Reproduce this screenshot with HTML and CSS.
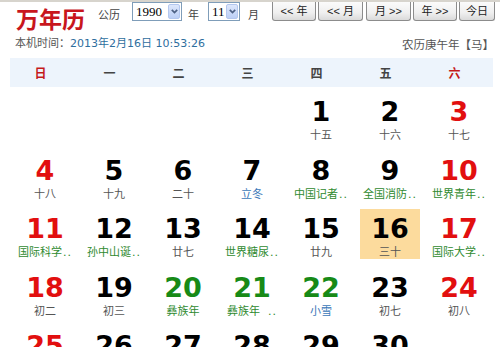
FILE: index.html
```html
<!DOCTYPE html>
<html lang="zh-CN">
<head>
<meta charset="utf-8">
<title>万年历</title>
<link rel="stylesheet" href="styles.css">
</head>
<body>
<div class="page">
  <div class="toolbar">
    <div class="title">万年历</div>
    <span class="lbl lbl-gl">公历</span>
    <div class="sel sel-year"><span class="val">1990</span><span class="arr"><svg width="7" height="5" viewBox="0 0 7 5"><path d="M0.8 0.8 L3.5 3.6 L6.2 0.8" fill="none" stroke="#4d6185" stroke-width="1.7"/></svg></span></div>
    <span class="lbl lbl-y">年</span>
    <div class="sel sel-month"><span class="val">11</span><span class="arr"><svg width="7" height="5" viewBox="0 0 7 5"><path d="M0.8 0.8 L3.5 3.6 L6.2 0.8" fill="none" stroke="#4d6185" stroke-width="1.7"/></svg></span></div>
    <span class="lbl lbl-m">月</span>
    <div class="btns">
      <button class="btn b1">&lt;&lt; 年</button>
      <button class="btn b2">&lt;&lt; 月</button>
      <button class="btn b3">月 &gt;&gt;</button>
      <button class="btn b4">年 &gt;&gt;</button>
      <button class="btn b5">今日</button>
    </div>
  </div>
  <div class="info">
    <span class="now">本机时间：<span class="time">2013年2月16日 10:53:26</span></span>
    <span class="lyear">农历庚午年【马】</span>
  </div>
  <div class="cal">
    <div class="week">
      <span class="we">日</span><span>一</span><span>二</span><span>三</span><span>四</span><span>五</span><span class="we">六</span>
    </div>
    <div class="days">
      <div class="d"></div>
      <div class="d"></div>
      <div class="d"></div>
      <div class="d"></div>
      <div class="d"><b class="n">1</b><span class="l">十五</span></div>
      <div class="d"><b class="n">2</b><span class="l">十六</span></div>
      <div class="d"><b class="n red">3</b><span class="l">十七</span></div>

      <div class="d"><b class="n red">4</b><span class="l">十八</span></div>
      <div class="d"><b class="n">5</b><span class="l">十九</span></div>
      <div class="d"><b class="n">6</b><span class="l">二十</span></div>
      <div class="d"><b class="n">7</b><span class="l term">立冬</span></div>
      <div class="d"><b class="n">8</b><span class="l fest">中国记者<i class="dots">..</i></span></div>
      <div class="d"><b class="n">9</b><span class="l fest">全国消防<i class="dots">..</i></span></div>
      <div class="d"><b class="n red">10</b><span class="l fest">世界青年<i class="dots">..</i></span></div>

      <div class="d"><b class="n red">11</b><span class="l fest">国际科学<i class="dots">..</i></span></div>
      <div class="d"><b class="n">12</b><span class="l fest">孙中山诞<i class="dots">..</i></span></div>
      <div class="d"><b class="n">13</b><span class="l">廿七</span></div>
      <div class="d"><b class="n">14</b><span class="l fest">世界糖尿<i class="dots">..</i></span></div>
      <div class="d"><b class="n">15</b><span class="l">廿九</span></div>
      <div class="d today"><b class="n">16</b><span class="l">三十</span></div>
      <div class="d"><b class="n red">17</b><span class="l fest">国际大学<i class="dots">..</i></span></div>

      <div class="d"><b class="n red">18</b><span class="l">初二</span></div>
      <div class="d"><b class="n">19</b><span class="l">初三</span></div>
      <div class="d"><b class="n grn">20</b><span class="l fest">彝族年</span></div>
      <div class="d"><b class="n grn">21</b><span class="l fest">彝族年<i class="dots gap">..</i></span></div>
      <div class="d"><b class="n grn">22</b><span class="l term">小雪</span></div>
      <div class="d"><b class="n">23</b><span class="l">初七</span></div>
      <div class="d"><b class="n red">24</b><span class="l">初八</span></div>

      <div class="d"><b class="n red">25</b><span class="l">初九</span></div>
      <div class="d"><b class="n">26</b><span class="l">初十</span></div>
      <div class="d"><b class="n">27</b><span class="l">十一</span></div>
      <div class="d"><b class="n">28</b><span class="l">十二</span></div>
      <div class="d"><b class="n">29</b><span class="l">十三</span></div>
      <div class="d"><b class="n">30</b><span class="l">十四</span></div>
      <div class="d"></div>
    </div>
  </div>
</div>
</body>
</html>
```

FILE: styles.css
```css
html, body {
  margin: 0;
  padding: 0;
  overflow: hidden;
  background: #fff;
}
body {
  border-top: 2px solid #d7d4cd;
  font-family: "DejaVu Sans", "Noto Sans CJK SC", sans-serif;
  color: #333;
}

/* ---------- toolbar ---------- */
.toolbar {
  display: flex;
  align-items: flex-start;
  height: 28px;
}
.title {
  flex: 0 0 70px;
  width: 70px;
  margin-left: 16px;
  margin-top: 5px;
  font-family: "Noto Sans CJK SC", sans-serif;
  font-weight: 700;
  font-size: 23px;
  line-height: 23px;
  color: #c8161d;
  white-space: nowrap;
}
.lbl {
  flex: none;
  font-family: "Noto Sans CJK SC", sans-serif;
  font-size: 11px;
  line-height: 14px;
  margin-top: 5px;
  color: #444;
  white-space: nowrap;
}
.lbl-gl { margin-left: 12px; width: 22px; }
.lbl-y { margin-left: 6px; width: 11px; }
.lbl-m { margin-left: 8px; width: 11px; }

.sel {
  flex: none;
  box-sizing: border-box;
  display: flex;
  align-items: stretch;
  height: 19px;
  margin-left: 12px;
  padding: 1px;
  border: 1px solid #7f9db9;
  background: #fff;
}
.sel-year { width: 50px; }
.sel-month { width: 32px; margin-left: 9px; }
.sel .val {
  flex: 1;
  font-family: "Liberation Serif", serif;
  font-size: 13px;
  line-height: 15px;
  color: #000;
  padding-left: 2px;
}
.sel .arr {
  box-sizing: border-box;
  width: 12px;
  display: flex;
  align-items: center;
  justify-content: center;
  border: 1px solid #b3c7ef;
  border-radius: 2px;
  background: linear-gradient(#dde7fb, #bccff6);
}

.btns {
  flex: none;
  display: flex;
  gap: 2px;
  margin-left: 13px;
}
.btn {
  box-sizing: border-box;
  height: 19px;
  padding: 0;
  border: 1px solid #8c8c8c;
  border-top: none;
  border-radius: 0 0 3px 3px;
  background: linear-gradient(#fbfbfb, #efefef 60%, #dadada);
  font-family: "Liberation Sans", "Noto Sans CJK SC", sans-serif;
  font-size: 11px;
  line-height: 16px;
  color: #222;
  white-space: nowrap;
}
.b1 { width: 44px; }
.b2 { width: 45px; }
.b3 { width: 45px; margin-left: 1px; }
.b4 { width: 44px; }
.b5 { width: 36px; }

/* ---------- info line ---------- */
.info {
  display: flex;
  justify-content: space-between;
  margin-top: 7px;
  padding: 0 6px 0 15px;
  font-size: 11px;
  line-height: 14px;
  color: #555;
}
.time { color: #2e6e9e; }
.lyear {
  font-family: "Noto Sans CJK SC", sans-serif;
  font-size: 11.5px;
}

/* ---------- calendar ---------- */
.cal {
  margin: 7px 0 0 10px;
  width: 483px;
}
.week {
  display: grid;
  grid-template-columns: repeat(7, 69px);
  height: 29px;
  align-items: center;
  background: #edf4fc;
}
.week span {
  text-align: center;
  padding-right: 8px;
  font-family: "Noto Sans CJK SC", sans-serif;
  font-weight: 700;
  font-size: 12px;
  line-height: 14px;
  color: #444;
}
.week .we { color: #c51a1a; }

.days {
  display: grid;
  grid-template-columns: repeat(7, 69px);
  grid-auto-rows: 58.5px;
}
.d {
  margin: 5px 4px 3.5px 5px;
  display: flex;
  flex-direction: column;
  align-items: center;
}
.d.today { background: #fcdb9d; }
.n {
  margin-top: 5px;
  font-family: "DejaVu Sans", sans-serif;
  font-weight: 700;
  font-size: 27px;
  line-height: 30px;
  color: #000;
}
.n.red { color: #e20f0f; }
.n.grn { color: #178a17; }
.l {
  font-family: "Noto Sans CJK SC", sans-serif;
  font-size: 11px;
  line-height: 14px;
  color: #555;
  white-space: nowrap;
}
.l.fest { color: #2f8a2f; }
.l.term { color: #3b78b8; }
.dots {
  font-style: normal;
  font-family: "DejaVu Sans", sans-serif;
  letter-spacing: 1px;
  margin-left: 1px;
}
.dots.gap { margin-left: 8px; }
```
